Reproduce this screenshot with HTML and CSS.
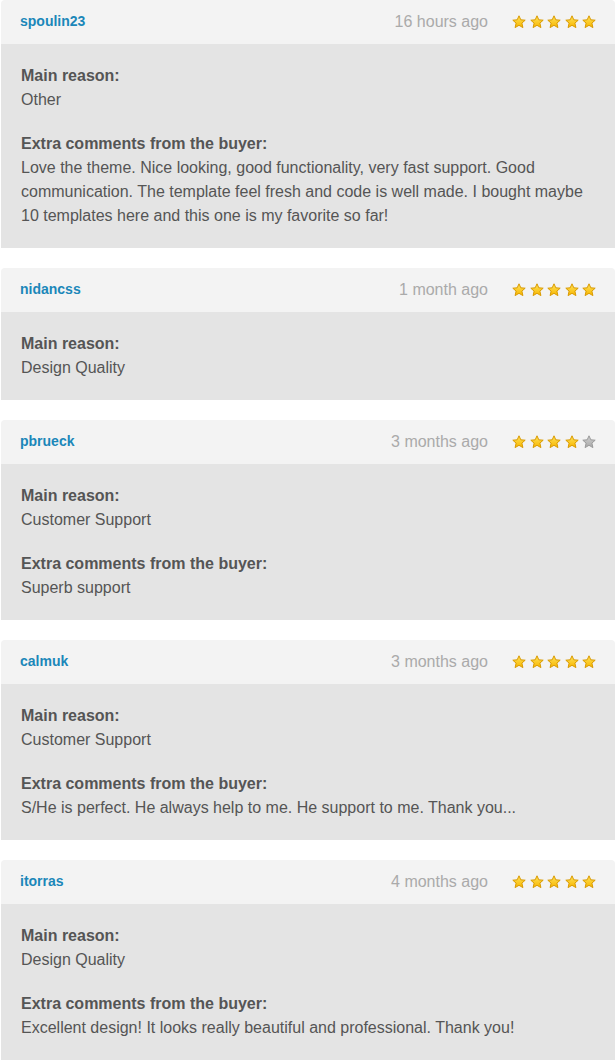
FILE: index.html
```html
<!DOCTYPE html>
<html>
<head>
<meta charset="utf-8">
<link rel="stylesheet" href="styles.css">
</head>
<body>
<svg width="0" height="0" class="defs">
  <defs>
    <linearGradient id="gold" x1="0" y1="0" x2="0" y2="1">
      <stop offset="0" stop-color="#ffe45a"/>
      <stop offset="1" stop-color="#f7b500"/>
    </linearGradient>
    <linearGradient id="grey" x1="0" y1="0" x2="0" y2="1">
      <stop offset="0" stop-color="#d0d0d0"/>
      <stop offset="1" stop-color="#a8a8a8"/>
    </linearGradient>
    <symbol id="star" viewBox="0 0 14 14">
      <path d="M7 0.8 L8.8 4.8 L13.2 5.2 L9.9 8.1 L10.9 12.6 L7 10.3 L3.1 12.6 L4.1 8.1 L0.8 5.2 L5.2 4.8 Z" stroke-linejoin="round"/>
    </symbol>
  </defs>
</svg>
<div class="list">
  <div class="card">
    <div class="head">
      <span class="user">spoulin23</span>
      <span class="time">16 hours ago</span>
      <span class="stars"><svg class="s on"><use href="#star"/></svg><svg class="s on"><use href="#star"/></svg><svg class="s on"><use href="#star"/></svg><svg class="s on"><use href="#star"/></svg><svg class="s on"><use href="#star"/></svg></span>
    </div>
    <div class="body">
      <div class="sec"><div class="label">Main reason:</div><div class="txt">Other</div></div>
      <div class="sec"><div class="label">Extra comments from the buyer:</div><div class="txt">Love the theme. Nice looking, good functionality, very fast support. Good communication. The template feel fresh and code is well made. I bought maybe 10 templates here and this one is my favorite so far!</div></div>
    </div>
  </div>
  <div class="card">
    <div class="head">
      <span class="user">nidancss</span>
      <span class="time">1 month ago</span>
      <span class="stars"><svg class="s on"><use href="#star"/></svg><svg class="s on"><use href="#star"/></svg><svg class="s on"><use href="#star"/></svg><svg class="s on"><use href="#star"/></svg><svg class="s on"><use href="#star"/></svg></span>
    </div>
    <div class="body">
      <div class="sec"><div class="label">Main reason:</div><div class="txt">Design Quality</div></div>
    </div>
  </div>
  <div class="card">
    <div class="head">
      <span class="user">pbrueck</span>
      <span class="time">3 months ago</span>
      <span class="stars"><svg class="s on"><use href="#star"/></svg><svg class="s on"><use href="#star"/></svg><svg class="s on"><use href="#star"/></svg><svg class="s on"><use href="#star"/></svg><svg class="s off"><use href="#star"/></svg></span>
    </div>
    <div class="body">
      <div class="sec"><div class="label">Main reason:</div><div class="txt">Customer Support</div></div>
      <div class="sec"><div class="label">Extra comments from the buyer:</div><div class="txt">Superb support</div></div>
    </div>
  </div>
  <div class="card">
    <div class="head">
      <span class="user">calmuk</span>
      <span class="time">3 months ago</span>
      <span class="stars"><svg class="s on"><use href="#star"/></svg><svg class="s on"><use href="#star"/></svg><svg class="s on"><use href="#star"/></svg><svg class="s on"><use href="#star"/></svg><svg class="s on"><use href="#star"/></svg></span>
    </div>
    <div class="body">
      <div class="sec"><div class="label">Main reason:</div><div class="txt">Customer Support</div></div>
      <div class="sec"><div class="label">Extra comments from the buyer:</div><div class="txt">S/He is perfect. He always help to me. He support to me. Thank you...</div></div>
    </div>
  </div>
  <div class="card">
    <div class="head">
      <span class="user">itorras</span>
      <span class="time">4 months ago</span>
      <span class="stars"><svg class="s on"><use href="#star"/></svg><svg class="s on"><use href="#star"/></svg><svg class="s on"><use href="#star"/></svg><svg class="s on"><use href="#star"/></svg><svg class="s on"><use href="#star"/></svg></span>
    </div>
    <div class="body">
      <div class="sec"><div class="label">Main reason:</div><div class="txt">Design Quality</div></div>
      <div class="sec"><div class="label">Extra comments from the buyer:</div><div class="txt">Excellent design! It looks really beautiful and professional. Thank you!</div></div>
    </div>
  </div>
</div>
</body>
</html>
```

FILE: styles.css
```css
html, body {
  margin: 0;
  padding: 0;
  background: #ffffff;
}
body {
  font-family: "Liberation Sans", Arial, sans-serif;
  overflow: hidden;
}
.defs {
  position: absolute;
  width: 0;
  height: 0;
}
.list {
  display: flex;
  flex-direction: column;
  gap: 20px;
  margin-left: 1px;
  width: 614px;
}
.card {
  border-radius: 4px 4px 0 0;
  overflow: hidden;
}
.head {
  height: 44px;
  background: #f3f3f3;
  display: flex;
  align-items: center;
  padding: 0 19px 0 19px;
  box-sizing: border-box;
}
.user {
  font-size: 14px;
  font-weight: bold;
  color: #1b87b9;
  margin-top: -3px;
}
.time {
  margin-left: auto;
  font-size: 16px;
  color: #aaaaaa;
  margin-right: 24px;
}
.stars {
  display: flex;
  gap: 3.5px;
  margin-top: -1px;
}
.s {
  width: 14px;
  height: 14px;
  display: block;
}
.s.on {
  fill: url(#gold);
  stroke: #d99a00;
  stroke-width: 1;
}
.s.off {
  fill: url(#grey);
  stroke: #9a9a9a;
  stroke-width: 1;
}
.body {
  background: #e4e4e4;
  padding: 20px 20px 20px 20px;
  display: flex;
  flex-direction: column;
  gap: 20px;
}
.label {
  font-size: 16px;
  line-height: 24px;
  font-weight: bold;
  color: #555555;
}
.txt {
  font-size: 16px;
  line-height: 24px;
  color: #555555;
}
```
